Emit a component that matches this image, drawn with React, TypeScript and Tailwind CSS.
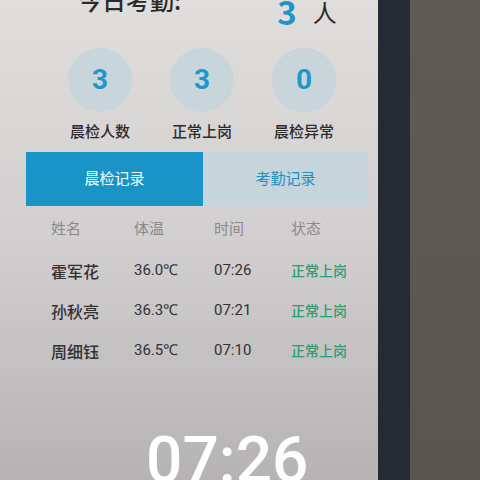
const stats = [
  { value: "3", label: "晨检人数" },
  { value: "3", label: "正常上岗" },
  { value: "0", label: "晨检异常" },
];

const rows = [
  { name: "霍军花", temp: "36.0℃", time: "07:26", status: "正常上岗" },
  { name: "孙秋亮", temp: "36.3℃", time: "07:21", status: "正常上岗" },
  { name: "周细钰", temp: "36.5℃", time: "07:10", status: "正常上岗" },
];

const font = "font-['Noto_Sans_CJK_SC','Noto_Sans',sans-serif]";

export default function App() {
  return (
    <div className={`relative flex h-[480px] w-[480px] overflow-hidden ${font}`}>
      {/* screen */}
      <div className="flex w-[378px] flex-col bg-gradient-to-b from-[#e0dddd] via-[#d2cfd0] to-[#b6b3b4]">
        {/* title, cut off by the photo's top edge */}
        <div className="mt-[-28px] flex h-[53px] items-end pl-[78px]">
          <span className="mb-[13px] text-[24px] leading-none font-medium text-[#2a2a2a]">今日考勤:</span>
          <span className="mb-[-3px] ml-[96px] text-[33px] leading-none font-bold text-[#1d95c9]">3</span>
          <span className="mb-[1px] ml-[16px] text-[24px] leading-none text-[#2a2a2a]">人</span>
        </div>

        {/* stats */}
        <div className="mt-[23px] flex pl-[49px]">
          {stats.map((s) => (
            <div key={s.label} className="flex w-[102px] flex-col items-center">
              <div className="flex h-[64px] w-[64px] items-center justify-center rounded-full bg-[#c8d6dc]">
                <span className="font-['Roboto',sans-serif] text-[28px] font-bold text-[#1f97cb]">{s.value}</span>
              </div>
              <span className="mt-[8px] text-[15px] font-medium text-[#2c2c2c]">{s.label}</span>
            </div>
          ))}
        </div>

        {/* tabs */}
        <div className="mx-[26px] mt-[9px] flex h-[54px] w-[342px]">
          <div className="flex w-[177px] items-center justify-center bg-[#1a93c6] text-[15px] text-white">
            晨检记录
          </div>
          <div className="flex flex-1 items-center justify-center bg-[#c5d5db] text-[15px] text-[#1d8fc0]">
            考勤记录
          </div>
        </div>

        {/* table */}
        <div className="mt-[5px] flex flex-col pl-[51px]">
          <div className="flex h-[36px] items-center text-[15px] text-[#8c8a8b]">
            <span className="w-[83px]">姓名</span>
            <span className="w-[80px]">体温</span>
            <span className="w-[77px]">时间</span>
            <span>状态</span>
          </div>
          <div className="mt-[4px] flex flex-col">
            {rows.map((r) => (
              <div key={r.name} className="flex h-[40px] items-center text-[#333233]">
                <span className="w-[83px] text-[16px] font-medium">{r.name}</span>
                <span className="w-[80px] font-['Roboto',sans-serif] text-[15px]">{r.temp}</span>
                <span className="w-[77px] font-['Roboto',sans-serif] text-[15px]">{r.time}</span>
                <span className="text-[14px] font-medium text-[#2e9c6c]">{r.status}</span>
              </div>
            ))}
          </div>
        </div>
      </div>

      {/* bezel */}
      <div className="w-[32px] bg-[#252a33]" />
      {/* wall */}
      <div className="flex-1 bg-gradient-to-b from-[#5d5c54] to-[#57564f]" />

      {/* recording timestamp */}
      <div className="absolute top-[429px] left-[146px] font-['Roboto',sans-serif] text-[64px] leading-none font-medium text-white">
        07:26
      </div>
    </div>
  );
}
